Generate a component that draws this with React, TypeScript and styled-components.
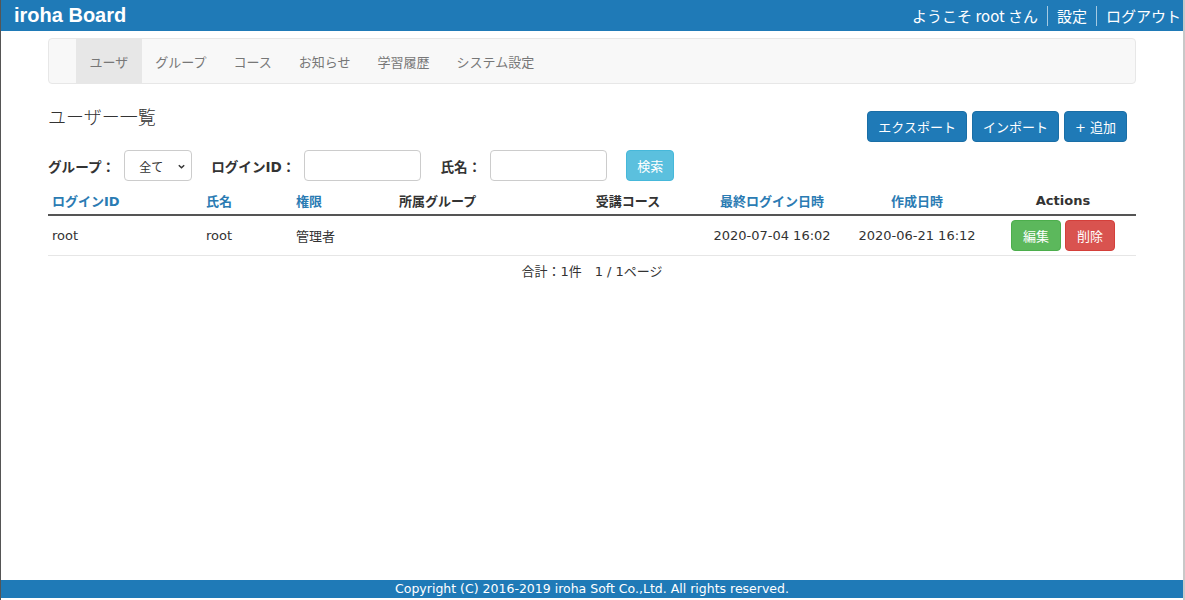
import React from 'react';
import styled, { createGlobalStyle } from 'styled-components';

const GlobalStyle = createGlobalStyle`
  html, body {
    margin: 0;
    padding: 0;
    background: #fff;
  }
  body {
    font-family: "DejaVu Sans", "Noto Sans CJK JP", sans-serif;
    font-size: 13px;
    color: #333;
  }
  * { box-sizing: border-box; }
`;

const blue = '#1f7ab7';

const Page = styled.div`
  min-height: 100vh;
  display: flex;
  flex-direction: column;
  border-left: 1px solid #555;
  border-right: 2px solid #c8c8c8;
`;

const Header = styled.header`
  height: 31px;
  background: ${blue};
  display: flex;
  align-items: center;
  justify-content: space-between;
  padding: 0 0 0 13px;
  color: #fff;
`;

const Brand = styled.div`
  font-family: "Liberation Sans", Arial, sans-serif;
  font-weight: bold;
  font-size: 20px;
`;

const UserMenu = styled.nav`
  display: flex;
  align-items: center;
  font-size: 15px;
  font-family: "Noto Sans CJK JP", sans-serif;
`;

const MenuItem = styled.span<{ $sep?: boolean }>`
  padding: 0 9px;
  line-height: 20px;
  border-left: ${({ $sep }) => ($sep ? '1px solid rgba(255,255,255,0.6)' : 'none')};
  &:last-child { padding-right: 2px; }
`;

const Container = styled.main`
  width: 1088px;
  margin: 0 auto;
`;

const NavBar = styled.div`
  margin-top: 7px;
  height: 46px;
  background: #f8f8f8;
  border: 1px solid #e7e7e7;
  border-radius: 4px;
  display: flex;
  padding-left: 27px;
`;

const NavItem = styled.div<{ $active?: boolean }>`
  display: flex;
  align-items: center;
  padding: 0 13.5px;
  color: #777;
  font-family: "Noto Sans CJK JP", sans-serif;
  font-size: 13px;
  background: ${({ $active }) => ($active ? '#e7e7e7' : 'transparent')};
`;

const TitleRow = styled.div`
  display: flex;
  justify-content: space-between;
  align-items: flex-start;
  margin-top: 16px;
`;

const Title = styled.h2`
  margin: 0;
  font-family: "Noto Sans CJK JP", sans-serif;
  font-weight: 300;
  font-size: 18px;
  line-height: 32px;
  color: #333;
`;

const ButtonGroup = styled.div`
  display: flex;
  gap: 5px;
  margin-top: 11px;
  margin-right: 9px;
`;

const Button = styled.button<{ $tone?: 'primary' | 'info' | 'success' | 'danger' }>`
  height: 31px;
  padding: 0 10px;
  border-radius: 4px;
  font-family: "DejaVu Sans", "Noto Sans CJK JP", sans-serif;
  font-size: 13px;
  color: #fff;
  cursor: pointer;
  border: 1px solid
    ${({ $tone }) =>
      $tone === 'info' ? '#46b8da' : $tone === 'success' ? '#4cae4c' : $tone === 'danger' ? '#d43f3a' : '#1a6ea6'};
  background: ${({ $tone }) =>
    $tone === 'info' ? '#5bc0de' : $tone === 'success' ? '#5cb85c' : $tone === 'danger' ? '#d9534f' : blue};
`;

const FilterRow = styled.form`
  display: flex;
  align-items: center;
  margin-top: 8px;
  height: 31px;
`;

const FilterLabel = styled.label`
  font-weight: bold;
  font-family: "DejaVu Sans", "Noto Sans CJK JP", sans-serif;
  font-size: 13.6px;
  margin-right: 9px;
`;

const SelectBox = styled.div`
  width: 68px;
  height: 31px;
  border: 1px solid #ccc;
  border-radius: 4px;
  display: flex;
  align-items: center;
  justify-content: space-between;
  padding: 2px 5px 0 14px;
  font-family: "Noto Sans CJK JP", sans-serif;
  font-size: 12px;
  margin-right: 19px;
`;

const TextInput = styled.input`
  width: 117px;
  height: 31px;
  border: 1px solid #ccc;
  border-radius: 4px;
  margin-right: 19px;
  padding: 0 6px;
`;

const Table = styled.table`
  width: 100%;
  margin-top: 8px;
  border-collapse: collapse;
  table-layout: fixed;
`;

const Th = styled.th<{ $align?: 'left' | 'center'; $link?: boolean }>`
  text-align: ${({ $align }) => $align ?? 'left'};
  font-weight: bold;
  font-size: 13px;
  color: ${({ $link }) => ($link ? '#2a7bb3' : '#333')};
  padding: 2px 4px 4px;
  height: 23px;
  border-bottom: 2px solid #555;
`;

const Td = styled.td<{ $align?: 'left' | 'center' }>`
  text-align: ${({ $align }) => $align ?? 'left'};
  height: 40px;
  padding: 0 4px;
  border-bottom: 1px solid #e6e6e6;
  font-size: 13px;
  color: #333;
  white-space: nowrap;
`;

const Actions = styled.div`
  display: flex;
  justify-content: center;
  gap: 4px;
`;

const RowButton = styled(Button)`
  padding: 0 11px;
`;

const Summary = styled.div`
  text-align: center;
  margin-top: 6px;
  line-height: 20px;
  font-size: 13px;
`;

const Footer = styled.footer`
  margin-top: auto;
  margin-bottom: 2px;
  height: 18px;
  background: ${blue};
  color: #fff;
  text-align: center;
  font-family: "DejaVu Sans", sans-serif;
  font-size: 12.5px;
  line-height: 18px;
`;

const columns: { label: string; width: number; align?: 'left' | 'center'; link?: boolean }[] = [
  { label: 'ログインID', width: 154, link: true },
  { label: '氏名', width: 90, link: true },
  { label: '権限', width: 103, link: true },
  { label: '所属グループ', width: 161 },
  { label: '受講コース', width: 144, align: 'center' },
  { label: '最終ログイン日時', width: 144, align: 'center', link: true },
  { label: '作成日時', width: 146, align: 'center', link: true },
  { label: 'Actions', width: 146, align: 'center' },
];

const navItems = ['ユーザ', 'グループ', 'コース', 'お知らせ', '学習履歴', 'システム設定'];

export default function App() {
  return (
    <Page>
      <GlobalStyle />
      <Header>
        <Brand>iroha Board</Brand>
        <UserMenu>
          <MenuItem>ようこそ root さん</MenuItem>
          <MenuItem $sep>設定</MenuItem>
          <MenuItem $sep>ログアウト</MenuItem>
        </UserMenu>
      </Header>
      <Container>
        <NavBar>
          {navItems.map((n, i) => (
            <NavItem key={n} $active={i === 0}>
              {n}
            </NavItem>
          ))}
        </NavBar>
        <TitleRow>
          <Title>ユーザー一覧</Title>
          <ButtonGroup>
            <Button>エクスポート</Button>
            <Button>インポート</Button>
            <Button>+ 追加</Button>
          </ButtonGroup>
        </TitleRow>
        <FilterRow>
          <FilterLabel>グループ：</FilterLabel>
          <SelectBox>
            <span>全て</span>
            <svg width="9" height="9" viewBox="0 0 10 10">
              <path d="M2 3.5 L5 6.5 L8 3.5" fill="none" stroke="#333" strokeWidth="1.6" />
            </svg>
          </SelectBox>
          <FilterLabel>ログインID：</FilterLabel>
          <TextInput />
          <FilterLabel>氏名：</FilterLabel>
          <TextInput />
          <Button type="button" $tone="info">
            検索
          </Button>
        </FilterRow>
        <Table>
          <colgroup>
            {columns.map((c) => (
              <col key={c.label} style={{ width: c.width }} />
            ))}
          </colgroup>
          <thead>
            <tr>
              {columns.map((c) => (
                <Th key={c.label} $align={c.align} $link={c.link}>
                  {c.label}
                </Th>
              ))}
            </tr>
          </thead>
          <tbody>
            <tr>
              <Td>root</Td>
              <Td>root</Td>
              <Td>管理者</Td>
              <Td></Td>
              <Td $align="center"></Td>
              <Td $align="center">2020-07-04 16:02</Td>
              <Td $align="center">2020-06-21 16:12</Td>
              <Td $align="center">
                <Actions>
                  <RowButton $tone="success">編集</RowButton>
                  <RowButton $tone="danger">削除</RowButton>
                </Actions>
              </Td>
            </tr>
          </tbody>
        </Table>
        <Summary>合計：1件　1 / 1ページ</Summary>
      </Container>
      <Footer>Copyright (C) 2016-2019 iroha Soft Co.,Ltd. All rights reserved.</Footer>
    </Page>
  );
}
